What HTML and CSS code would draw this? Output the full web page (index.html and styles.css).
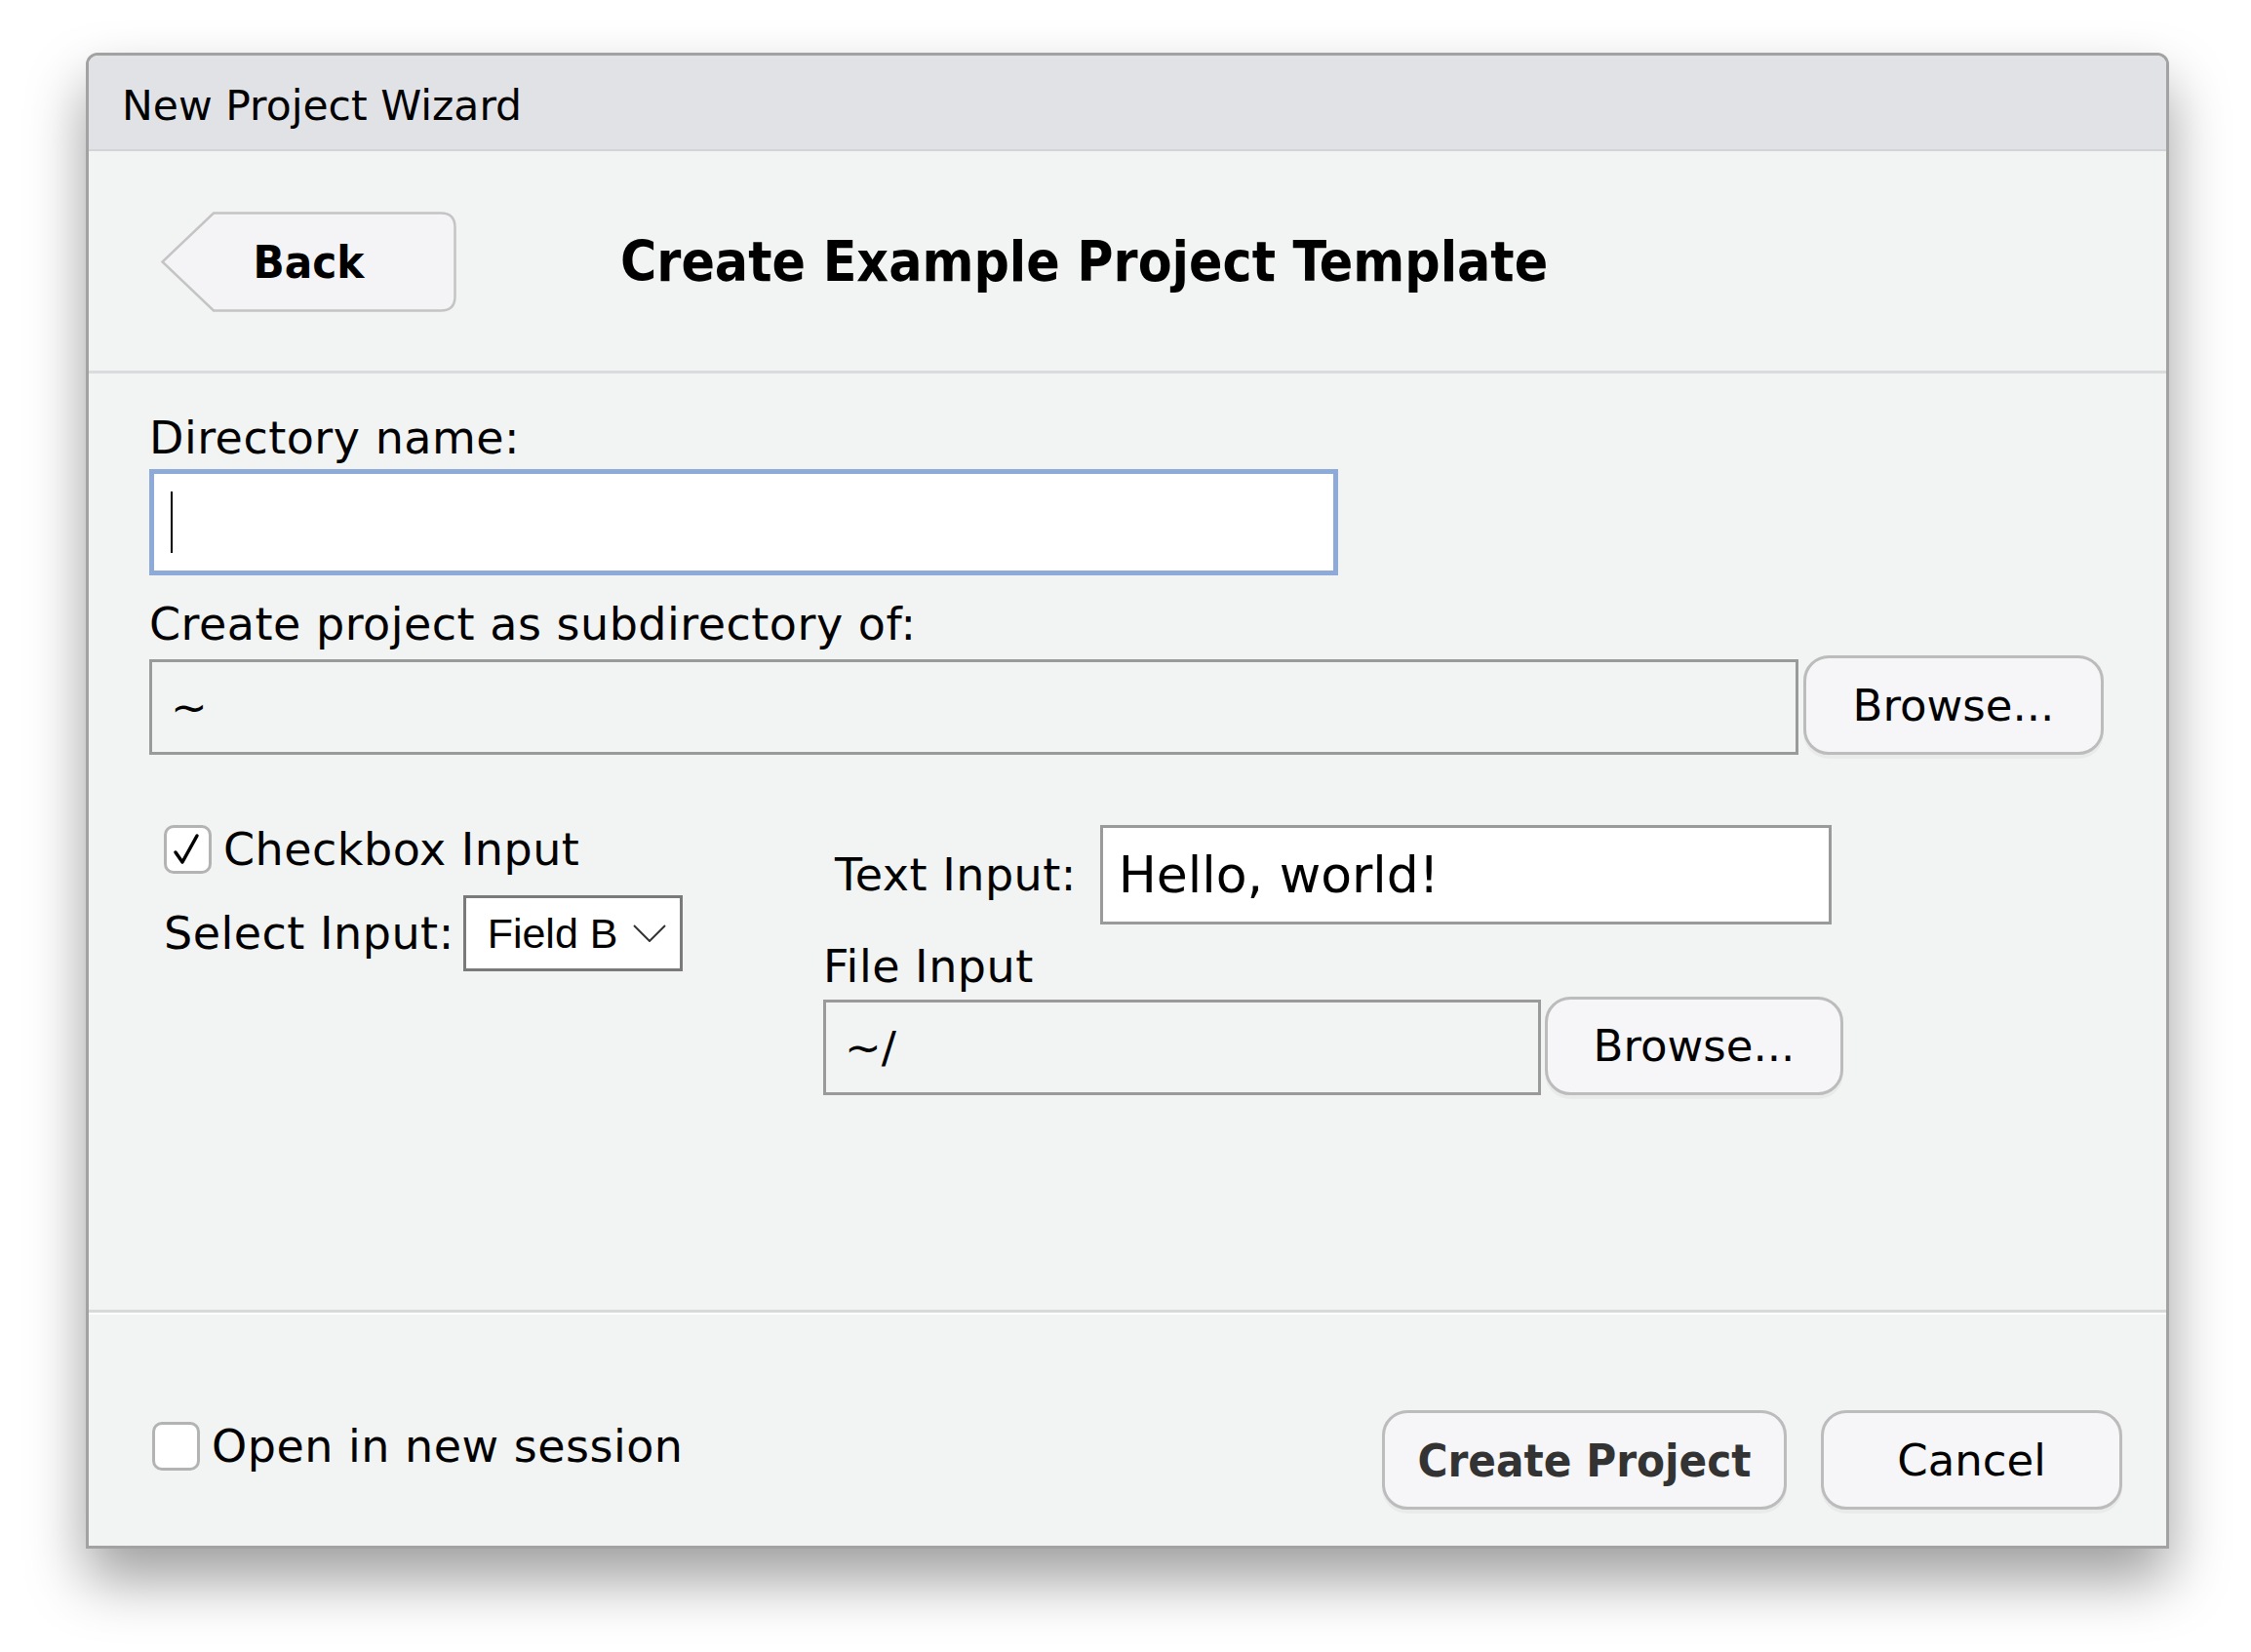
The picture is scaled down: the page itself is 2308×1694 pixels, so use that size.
FILE: index.html
```html
<!DOCTYPE html>
<html lang="en">
<head>
  <meta charset="UTF-8">
  <title>New Project Wizard</title>
  <link rel="stylesheet" href="styles.css">
</head>
<body>

  <div class="window">
    <div class="titlebar">New Project Wizard</div>

    <div class="header">
      <div class="back-btn">
        <svg class="back-shape" viewBox="0 0 303 103" width="303" height="103">
          <path d="M54 1.5 H287 Q301.5 1.5 301.5 16 V87 Q301.5 101.5 287 101.5 H54 L1.5 51.5 Z" fill="#f4f4f6" stroke="#c4c4c4" stroke-width="2.5"/>
        </svg>
        <span class="back-label">Back</span>
      </div>
      <h1>Create Example Project Template</h1>
    </div>

    <div class="content">
      <div class="label">Directory name:</div>
      <div class="dir-input"><span class="caret"></span></div>

      <div class="label label-gap">Create project as subdirectory of:</div>
      <div class="path-row">
        <div class="path-box">~</div>
        <div class="btn browse-btn">Browse...</div>
      </div>

      <div class="widgets">
        <div class="col-left">
          <div class="check-row">
            <span class="checkbox">
              <svg viewBox="0 0 43 44" width="43" height="44">
                <path d="M9 25 L16 35 L31 8" fill="none" stroke="#000" stroke-width="3.5" stroke-linecap="round" stroke-linejoin="round"/>
              </svg>
            </span>
            <span class="check-text">Checkbox Input</span>
          </div>
          <div class="select-row">
            <span class="select-label">Select Input:</span>
            <div class="select-box">
              <span class="select-value">Field B</span>
              <svg class="chevron" viewBox="0 0 34 18" width="34" height="18">
                <polyline points="1,1 17,17 33,1" fill="none" stroke="#333" stroke-width="2"/>
              </svg>
            </div>
          </div>
        </div>

        <div class="col-right">
          <div class="text-row">
            <span class="text-label">Text Input:</span>
            <div class="text-box">Hello, world!</div>
          </div>
          <div class="label file-label">File Input</div>
          <div class="path-row file-row">
            <div class="path-box file-box">~/</div>
            <div class="btn browse-btn file-browse">Browse...</div>
          </div>
        </div>
      </div>
    </div>

    <div class="footer">
      <div class="check-row session-row">
        <span class="checkbox"></span>
        <span class="check-text">Open in new session</span>
      </div>
      <div class="btn create-btn">Create Project</div>
      <div class="btn cancel-btn">Cancel</div>
    </div>
  </div>

</body>
</html>
```

FILE: styles.css
```css
* {
  box-sizing: border-box;
}

html {
  background: #fff;
}

body {
  margin: 0;
  min-height: 1694px;
  padding: 54px 0 0 88px;
  font-family: "DejaVu Sans", sans-serif;
  color: #000;
}

.window {
  width: 2136px;
  height: 1534px;
  border: 3px solid #a2a2a2;
  border-radius: 12px 12px 0 0;
  background: #f2f3f3;
  box-shadow: 0 32px 60px rgba(0, 0, 0, 0.38);
  display: flex;
  flex-direction: column;
  overflow: hidden;
}

.titlebar {
  height: 98px;
  flex: none;
  background: #e1e2e6;
  border-bottom: 2px solid #d3d4d8;
  padding: 6px 0 0 34px;
  display: flex;
  align-items: center;
  font-size: 42.5px;
}

/* header with back arrow and heading */
.header {
  height: 228px;
  flex: none;
  display: flex;
  align-items: center;
  padding: 2px 0 0 74px;
  border-bottom: 3px solid #dadbdc;
}

.back-btn {
  position: relative;
  width: 303px;
  height: 103px;
  display: flex;
  align-items: center;
  justify-content: center;
}

.back-shape {
  position: absolute;
  top: 0;
  left: 0;
}

.back-label {
  position: relative;
  font-family: "DejaVu Sans Condensed", "DejaVu Sans", sans-serif;
  font-stretch: condensed;
  font-weight: bold;
  font-size: 47px;
}

.header h1 {
  margin: 0 0 0 168px;
  font-family: "DejaVu Sans Condensed", "DejaVu Sans", sans-serif;
  font-stretch: condensed;
  font-weight: bold;
  font-size: 56.5px;
}

.content {
  flex: 1;
  padding: 40px 0 0 62px;
}

.label,
.check-text,
.select-label,
.text-label {
  font-size: 46px;
  letter-spacing: 0.5px;
}

.label {
  line-height: 52px;
}

.label-gap {
  margin-top: 24px;
}

.dir-input {
  width: 1219px;
  height: 109px;
  margin-top: 6px;
  border: 5px solid #8eaad8;
  background: #fff;
}

.caret {
  display: block;
  width: 2px;
  height: 63px;
  margin: 18px 0 0 17px;
  background: #000;
}

.path-row {
  display: flex;
  align-items: flex-end;
  margin-top: 6px;
}

.path-box {
  width: 1691px;
  height: 98px;
  border: 3px solid #9a9a9a;
  padding-left: 19px;
  display: flex;
  align-items: center;
  font-size: 45px;
}

.btn {
  height: 102px;
  border: 3px solid #bcbcbc;
  border-radius: 26px;
  background: #f6f6f8;
  box-shadow: 0 4px 0 rgba(0, 0, 0, 0.035);
  display: flex;
  align-items: center;
  justify-content: center;
  font-size: 45px;
}

.browse-btn {
  width: 308px;
  margin-left: 5px;
}

.widgets {
  display: flex;
  margin-top: 72px;
}

.col-left {
  width: 691px;
  flex: none;
  padding-left: 15px;
}

.check-row {
  display: flex;
  align-items: center;
  height: 50px;
}

.checkbox {
  width: 49px;
  height: 50px;
  flex: none;
  border: 3px solid #b3b3b3;
  border-radius: 10px;
  background: #fff;
  display: flex;
  align-items: center;
  justify-content: center;
}

.check-text {
  margin-left: 12px;
  line-height: 52px;
}

.select-row {
  display: flex;
  align-items: center;
  margin-top: 22px;
}

.select-label {
  margin-right: 9px;
}

.select-box {
  width: 225px;
  height: 78px;
  border: 3px solid #7a7a7a;
  background: #fff;
  padding-left: 22px;
  display: flex;
  align-items: center;
}

.select-value {
  font-family: "Liberation Sans", Arial, sans-serif;
  font-size: 43px;
}

.chevron {
  margin-left: 16px;
}

.col-right {
  flex: none;
}

.text-row {
  display: flex;
  align-items: center;
  padding-left: 12px;
}

.text-label {
  margin-right: 24px;
}

.text-box {
  width: 750px;
  height: 102px;
  border: 3px solid #9a9a9a;
  background: #fff;
  padding-left: 16px;
  display: flex;
  align-items: center;
  font-size: 52px;
}

.file-label {
  margin-top: 17px;
}

.file-row {
  margin-top: 5px;
}

.file-box {
  width: 736px;
}

.file-browse {
  width: 306px;
  height: 101px;
  margin-left: 4px;
}

/* bottom bar */
.footer {
  height: 242px;
  flex: none;
  border-top: 3px solid #d8d9da;
  box-shadow: inset 0 2px 0 #fff;
  padding: 100px 45px 37px 65px;
  display: flex;
  align-items: center;
}

.session-row {
  margin-bottom: 28px;
}

.create-btn {
  width: 415px;
  margin-left: auto;
  color: #333;
  font-family: "DejaVu Sans Condensed", "DejaVu Sans", sans-serif;
  font-stretch: condensed;
  font-weight: bold;
  font-size: 47px;
}

.cancel-btn {
  width: 309px;
  margin-left: 35px;
}
```
